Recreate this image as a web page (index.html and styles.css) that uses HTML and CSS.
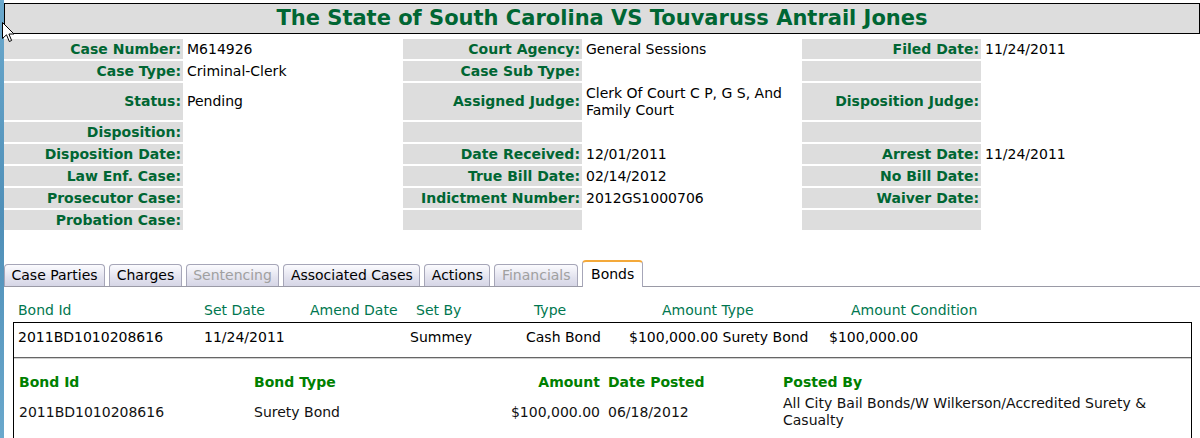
FILE: index.html
```html
<!DOCTYPE html>
<html lang="en">
<head>
    <meta charset="UTF-8">
    <meta name="viewport" content="width=device-width, initial-scale=1.0">
    <title>Case Details</title>
    <link rel="stylesheet" href="styles.css">
</head>
<body>
    <div class="page">
        <h1 class="case-title">The State of South Carolina VS Touvaruss Antrail Jones</h1>

        <div class="case-info">
            <div class="label">Case Number:</div><div class="value">M614926</div>
            <div class="label">Court Agency:</div><div class="value">General Sessions</div>
            <div class="label">Filed Date:</div><div class="value">11/24/2011</div>

            <div class="label">Case Type:</div><div class="value">Criminal-Clerk</div>
            <div class="label">Case Sub Type:</div><div class="value"></div>
            <div class="label"></div><div class="value"></div>

            <div class="label">Status:</div><div class="value">Pending</div>
            <div class="label">Assigned Judge:</div><div class="value">Clerk Of Court C P, G S, And Family Court</div>
            <div class="label">Disposition Judge:</div><div class="value"></div>

            <div class="label">Disposition:</div><div class="value"></div>
            <div class="label"></div><div class="value"></div>
            <div class="label"></div><div class="value"></div>

            <div class="label">Disposition Date:</div><div class="value"></div>
            <div class="label">Date Received:</div><div class="value">12/01/2011</div>
            <div class="label">Arrest Date:</div><div class="value">11/24/2011</div>

            <div class="label">Law Enf. Case:</div><div class="value"></div>
            <div class="label">True Bill Date:</div><div class="value">02/14/2012</div>
            <div class="label">No Bill Date:</div><div class="value"></div>

            <div class="label">Prosecutor Case:</div><div class="value"></div>
            <div class="label">Indictment Number:</div><div class="value">2012GS1000706</div>
            <div class="label">Waiver Date:</div><div class="value"></div>

            <div class="label">Probation Case:</div><div class="value"></div>
            <div class="label"></div><div class="value"></div>
            <div class="label"></div><div class="value"></div>
        </div>

        <ul class="tabs">
            <li class="tab">Case Parties</li>
            <li class="tab">Charges</li>
            <li class="tab disabled">Sentencing</li>
            <li class="tab">Associated Cases</li>
            <li class="tab">Actions</li>
            <li class="tab disabled">Financials</li>
            <li class="tab active">Bonds</li>
        </ul>

        <div class="tab-panel">
            <div class="bond-head">
                <span>Bond Id</span>
                <span>Set Date</span>
                <span>Amend Date</span>
                <span>Set By</span>
                <span>Type</span>
                <span>Amount Type</span>
                <span>Amount Condition</span>
            </div>
            <div class="bond-box">
                <div class="bond-row">
                    <span>2011BD1010208616</span>
                    <span>11/24/2011</span>
                    <span>Summey</span>
                    <span>Cash Bond</span>
                    <span>$100,000.00 Surety Bond</span>
                    <span>$100,000.00</span>
                </div>
                <hr class="bond-sep">
                <div class="post-grid post-head">
                    <span>Bond Id</span>
                    <span>Bond Type</span>
                    <span class="amount">Amount</span>
                    <span class="posted">Date Posted</span>
                    <span>Posted By</span>
                </div>
                <div class="post-grid post-row">
                    <span>2011BD1010208616</span>
                    <span>Surety Bond</span>
                    <span class="amount">$100,000.00</span>
                    <span class="posted">06/18/2012</span>
                    <span>All City Bail Bonds/W Wilkerson/Accredited Surety &amp; Casualty</span>
                </div>
            </div>
        </div>
    </div>

    <!-- mouse pointer over the page -->
    <svg class="cursor" width="13" height="21" viewBox="0 0 13 21">
        <path d="M0.5 0.5 L0.5 16.5 L4.5 12.8 L7.3 19.5 L9.6 18.5 L6.9 12 L12 12 Z" fill="#fff" stroke="#000" stroke-width="1"/>
    </svg>
</body>
</html>
```

FILE: styles.css
```css
body {
    margin: 0;
    background-color: #5b9cc2;
    background-image: linear-gradient(180deg, #6aa8cc, #4f8fb8 50%, #6aa8cc);
    font-family: Verdana, "DejaVu Sans", sans-serif;
    font-size: 14px;
    color: #000;
}
.page {
    margin-left: 4px;
    height: 438px;
    padding-top: 3px;
    box-sizing: border-box;
    background-color: #fff;
    overflow: hidden;
}
.case-title {
    margin: 0;
    height: 29px;
    line-height: 29px;
    border: 1px solid #000;
    background-color: #dddddd;
    color: #006633;
    font-size: 21px;
    font-weight: bold;
    text-align: center;
}
.case-info {
    display: grid;
    grid-template-columns: 179px 216px 179px 216px 179px 1fr;
    grid-auto-rows: minmax(20px, auto);
    gap: 2px;
    margin-top: 5px;
}
.label,
.value {
    display: flex;
    align-items: center;
    padding-top: 1.5px;
    padding-bottom: 1.5px;
    line-height: 17px;
}
.label {
    justify-content: flex-end;
    padding-right: 2px;
    background-color: #dddddd;
    color: #006633;
    font-weight: bold;
}
.value {
    padding-left: 2px;
}
.tabs {
    display: flex;
    align-items: flex-end;
    gap: 4px;
    margin: 30px 0 0;
    padding: 0;
    list-style: none;
    border-bottom: 1px solid #9a9aa6;
}
.tab {
    padding: 0 6.5px;
    line-height: 21px;
    border: 1px solid #a6a6b8;
    border-bottom: none;
    border-radius: 4px 4px 0 0;
    background: linear-gradient(180deg, #fbfbfe, #e2e2ee 60%, #d6d6e6);
    color: #000;
}
.tab.disabled {
    color: #a0a0a0;
}
.tab.active {
    padding: 2px 8px 2px;
    margin-bottom: -1px;
    border-top: 2px solid #f4a93a;
    border-color: #f4a93a #a6a6b8 #a6a6b8;
    background: #fff;
}
.tab-panel {
    padding: 13px 8px 0 9px;
}
.bond-head {
    display: grid;
    grid-template-columns: 186px 106px 106px 118px 128px 189px 1fr;
    padding-left: 5px;
    margin-bottom: 2px;
    line-height: 20px;
    color: #00774f;
}
.bond-box {
    border: 1px solid #000;
    padding-bottom: 20px;
}
.bond-row {
    display: grid;
    grid-template-columns: 186px 206px 116px 103px 200px 1fr;
    padding: 4px 0 4px 4px;
    line-height: 20px;
}
.bond-sep {
    margin: 6px 0 0;
    height: 0;
    border: none;
    border-top: 1px solid #666;
    border-bottom: 1px solid #d0d0d0;
}
.post-grid {
    display: grid;
    grid-template-columns: 235px 200px 150px 179px 1fr;
    padding: 0 20px 0 5px;
    align-items: center;
}
.post-grid .amount {
    text-align: right;
    padding-right: 4px;
}
.post-grid .posted {
    padding-left: 4px;
}
.post-head {
    margin-top: 13px;
    line-height: 20px;
    color: #008000;
    font-weight: bold;
}
.post-row {
    margin-top: 3px;
    line-height: 17px;
    color: #111;
}
.cursor {
    position: absolute;
    left: 2px;
    top: 22px;
}
```
